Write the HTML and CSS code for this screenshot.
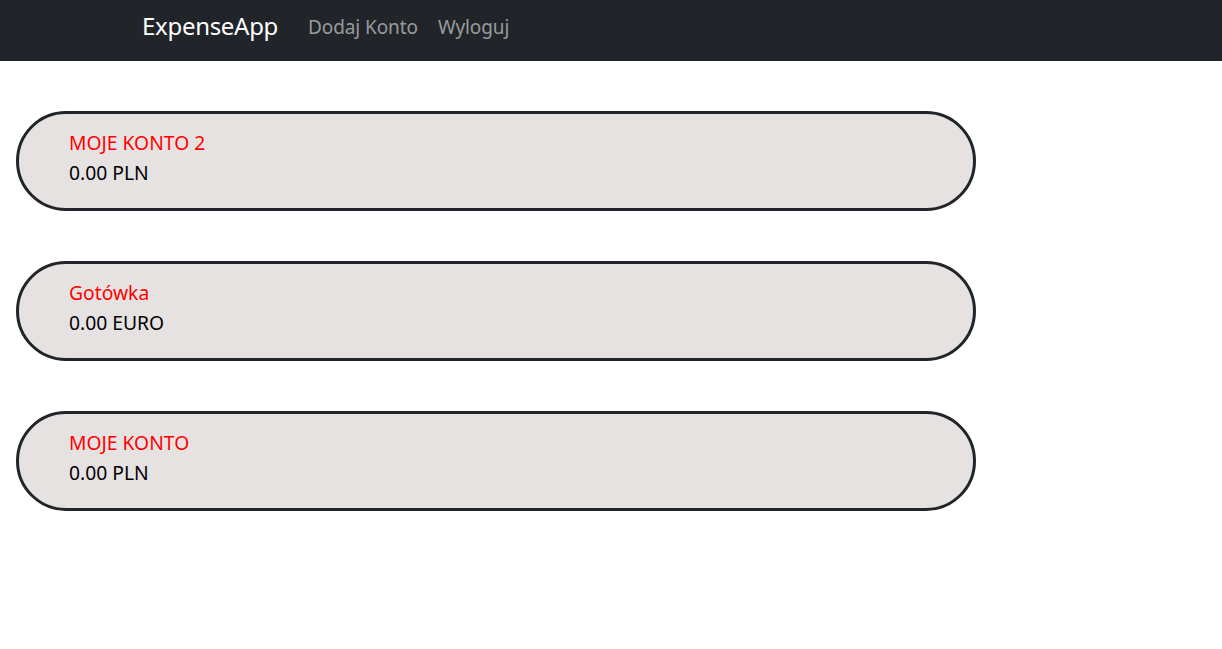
FILE: index.html
```html
<!DOCTYPE html>
<html lang="pl">
<head>
<meta charset="utf-8">
<title>ExpenseApp</title>
<link rel="stylesheet" href="styles.css">
</head>
<body>
<nav class="navbar">
  <a class="brand" href="#">ExpenseApp</a>
  <ul class="nav">
    <li><a class="nav-link" href="#">Dodaj Konto</a></li>
    <li><a class="nav-link" href="#">Wyloguj</a></li>
  </ul>
</nav>
<main class="accounts">
  <div class="account">
    <div class="account-name">MOJE KONTO 2</div>
    <div class="account-balance">0.00 PLN</div>
  </div>
  <div class="account">
    <div class="account-name">Gotówka</div>
    <div class="account-balance">0.00 EURO</div>
  </div>
  <div class="account">
    <div class="account-name">MOJE KONTO</div>
    <div class="account-balance">0.00 PLN</div>
  </div>
</main>
</body>
</html>
```
FILE: styles.css
```css
* { box-sizing: border-box; }
html, body {
  margin: 0;
  padding: 0;
  background: #fff;
  font-family: "Noto Sans", "Open Sans", sans-serif;
  font-size: 20px;
  line-height: 1.5;
  color: #212529;
}
.navbar {
  height: 61px;
  background: #212529;
  display: flex;
  align-items: center;
  padding-left: 142px;
  padding-bottom: 6px;
}
.brand {
  color: #fff;
  text-decoration: none;
  font-size: 24px;
  margin-right: 20px;
  letter-spacing: -0.3px;
  padding-bottom: 4px;
}
.nav {
  list-style: none;
  margin: 0;
  padding: 0;
  display: flex;
}
.nav-link {
  display: block;
  padding: 0 10px;
  color: rgba(255, 255, 255, 0.55);
  text-decoration: none;
  font-size: 19px;
  letter-spacing: -0.1px;
}
.accounts {
  padding: 50px 0 0 16px;
  display: flex;
  flex-direction: column;
  gap: 50px;
}
.account {
  width: 960px;
  height: 100px;
  border: 3px solid #212529;
  border-radius: 50px;
  background: #e6e2e2;
  padding: 14px 50px 0;
  font-size: 19.3px;
  line-height: 30px;
}
.account-name {
  color: #ff0000;
}
.account-balance {
  color: #000;
}
```
